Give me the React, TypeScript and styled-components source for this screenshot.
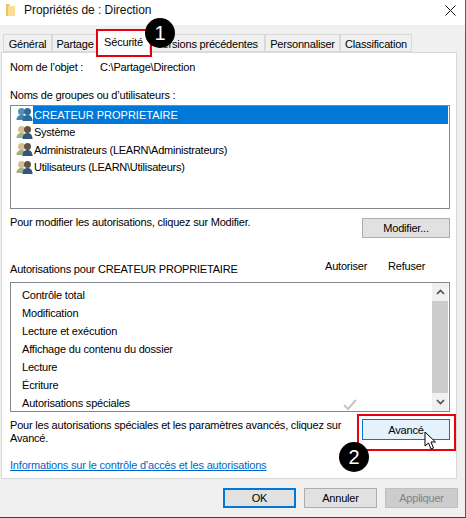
import React from "react";
import styled, { createGlobalStyle } from "styled-components";

const Global = createGlobalStyle`
  html, body { margin: 0; padding: 0; background: #f0f0f0; }
  #root { width: 466px; height: 518px; }
`;

const Win = styled.div`
  position: relative;
  width: 466px;
  height: 518px;
  box-sizing: border-box;
  overflow: hidden;
  background: #f0f0f0;
  border-right: 1px solid #5a5a5a;
  border-bottom: 1px solid #1d4f57;
  font-family: "Liberation Sans", Arial, sans-serif;
  font-size: 11px;
  letter-spacing: -0.2px;
  color: #000;
`;

const TitleBar = styled.div`
  height: 25px;
  box-sizing: border-box;
  background: #fff;
  display: flex;
  align-items: center;
  padding: 0 9px 5px 5px;
  gap: 8px;
  font-size: 12px;
  letter-spacing: -0.05px;
`;
const Title = styled.span`
  flex: 1;
  color: #111;
`;
const FolderSvg = styled.svg`
  flex-shrink: 0;
`;

const TabStrip = styled.div`
  height: 27px;
  display: flex;
  align-items: flex-end;
  padding-left: 3px;
`;
const Tab = styled.div<{ $w: number; $active?: boolean }>`
  width: ${(p) => p.$w}px;
  height: ${(p) => (p.$active ? 23 : 18)}px;
  box-sizing: border-box;
  display: flex;
  align-items: ${(p) => (p.$active ? "flex-start" : "center")};
  justify-content: center;
  padding-top: ${(p) => (p.$active ? "5px" : "1px")};
  white-space: nowrap;
  overflow: hidden;
  border: 1px solid #d9d9d9;
  border-bottom: ${(p) => (p.$active ? "none" : "1px solid #d9d9d9")};
  margin-left: ${(p) => (p.$active ? "-1px" : "0")};
  margin-right: ${(p) => (p.$active ? "-1px" : "0")};
  margin-bottom: ${(p) => (p.$active ? "-1px" : "0")};
  background: ${(p) => (p.$active ? "#fff" : "#f0f0f0")};
  position: relative;
  z-index: ${(p) => (p.$active ? 1 : 0)};
`;

const Panel = styled.div`
  margin-left: 1px;
  width: 456px;
  height: 427px;
  box-sizing: border-box;
  background: #fff;
  border: 1px solid #d9d9d9;
  padding: 0 6px 0 8px;
  display: flex;
  flex-direction: column;
`;

const Line = styled.div<{ $h: number; $pt?: number }>`
  height: ${(p) => p.$h}px;
  box-sizing: border-box;
  padding-top: ${(p) => p.$pt ?? 0}px;
  display: flex;
  align-items: center;
  flex-shrink: 0;
  white-space: nowrap;
`;
const ObjectLabel = styled.span`
  width: 90px;
`;

const ListBox = styled.div<{ $h: number }>`
  position: relative;
  height: ${(p) => p.$h}px;
  box-sizing: border-box;
  border: 1px solid #828790;
  background: #fff;
  flex-shrink: 0;
  display: flex;
`;
const UserList = styled.div`
  flex: 1;
  padding: 0 1px;
  display: flex;
  flex-direction: column;
`;
const UserRow = styled.div`
  height: 17.5px;
  display: flex;
  align-items: center;
  padding-left: 4px;
`;
const UserName = styled.div<{ $sel?: boolean }>`
  flex: ${(p) => (p.$sel ? 1 : "none")};
  height: 100%;
  display: flex;
  align-items: center;
  padding-left: 1px;
  background: ${(p) => (p.$sel ? "#0078d7" : "transparent")};
  color: ${(p) => (p.$sel ? "#fff" : "#000")};
  letter-spacing: ${(p) => (p.$sel ? "0" : "-0.25px")};
`;

const ModifyRow = styled.div`
  height: 29px;
  display: flex;
  justify-content: space-between;
  align-items: flex-start;
  flex-shrink: 0;
`;
const ModifyText = styled.span`
  margin-top: 7px;
`;
const ModifyBtn = styled.div`
  margin-top: 9px;
`;

const HeadRow = styled.div`
  height: 44px;
  display: flex;
  justify-content: space-between;
  align-items: flex-end;
  flex-shrink: 0;
  white-space: nowrap;
`;
const HeadLabel = styled.span`
  margin-bottom: 7px;
`;
const PermHead = styled.div`
  display: flex;
  margin-bottom: 10px;
`;
const PermHeadCol = styled.span<{ $w: number }>`
  width: ${(p) => p.$w}px;
`;

const PermList = styled.div`
  flex: 1;
  padding: 3px 0 0 11px;
`;
const PermRow = styled.div`
  height: 18px;
  display: flex;
  align-items: center;
`;
const Scrollbar = styled.div`
  width: 16px;
  margin: 0 1px 0 0;
  background: #f0f0f0;
  display: flex;
  flex-direction: column;
`;
const ScrollBtn = styled.div`
  height: 18px;
  display: flex;
  align-items: center;
  justify-content: center;
  flex-shrink: 0;
`;
const Thumb = styled.div`
  flex: 1;
  background: #cdcdcd;
`;
const Check = styled.svg`
  position: absolute;
  left: 331px;
  top: 115px;
`;

const Btn = styled.div<{ $kind?: "hover" | "default" | "disabled" }>`
  width: 88px;
  height: 20px;
  box-sizing: border-box;
  display: flex;
  align-items: center;
  justify-content: center;
  flex-shrink: 0;
  border: ${(p) =>
    p.$kind === "hover"
      ? "1px solid #0078d7"
      : p.$kind === "default"
      ? "2px solid #0078d7"
      : p.$kind === "disabled"
      ? "1px solid #bfbfbf"
      : "1px solid #adadad"};
  background: ${(p) =>
    p.$kind === "hover" ? "#e5f1fb" : p.$kind === "disabled" ? "#cccccc" : "#e1e1e1"};
  color: ${(p) => (p.$kind === "disabled" ? "#838383" : "#000")};
`;
const AdvancedBtn = styled(Btn)`
  height: 21px;
  margin-top: 3px;
`;
const AdvancedRow = styled.div`
  height: 28px;
  margin-top: 4px;
  display: flex;
  justify-content: space-between;
  align-items: flex-start;
  flex-shrink: 0;
`;
const Help = styled.div`
  width: 340px;
  line-height: 13px;
  padding-top: 3px;
`;
const HelpLink = styled.span`
  color: #0066cc;
  text-decoration: underline;
`;
const Footer = styled.div`
  display: flex;
  justify-content: flex-end;
  gap: 8px;
  padding: 9px 7px 0 0;
`;
const FootBtn = styled(Btn)`
  width: 73px;
`;

const RedBox = styled.div<{ $x: number; $y: number; $w: number; $h: number }>`
  position: absolute;
  left: ${(p) => p.$x}px;
  top: ${(p) => p.$y}px;
  width: ${(p) => p.$w}px;
  height: ${(p) => p.$h}px;
  box-sizing: border-box;
  border: 2px solid #e8000b;
  z-index: 2;
`;
const Badge = styled.div<{ $x: number; $y: number }>`
  position: absolute;
  left: ${(p) => p.$x}px;
  top: ${(p) => p.$y}px;
  width: 30px;
  height: 30px;
  border-radius: 50%;
  background: #000;
  color: #fff;
  font-family: "Liberation Sans", sans-serif;
  font-size: 20px;
  letter-spacing: 0;
  display: flex;
  align-items: center;
  justify-content: center;
  z-index: 3;
`;
const Cursor = styled.svg`
  position: absolute;
  left: 424px;
  top: 431px;
  z-index: 4;
`;

const FolderIcon = () => (
  <FolderSvg width="11" height="13" viewBox="0 0 11 13">
    <path d="M1 0h3l1 2h5v10H1z" fill="#e9c566" />
    <path d="M3 2h7v10H3z" fill="#f8de96" />
  </FolderSvg>
);

const UsersIcon = ({ selected }: { selected?: boolean }) => {
  const a = selected ? "#3d87b8" : "#a3b07e";
  const b = selected ? "#2d6a9a" : "#34557f";
  const skinA = selected ? "#4f8fbc" : "#d9bd8f";
  const skinB = selected ? "#2f6b96" : "#5f5348";
  return (
    <svg width="17" height="15" viewBox="0 0 17 15" style={{ flexShrink: 0 }}>
      <circle cx="5.5" cy="4.5" r="3.5" fill={skinA} />
      <path d="M0.5 13c0-3.5 2-5 5-5s5 1.500 5 5z" fill={a} />
      <circle cx="11.500" cy="4.500" r="3.500" fill={skinB} />
      <path d="M6.500 14c0-4 2-6 5-6s5 2 5 6z" fill={b} />
    </svg>
  );
};

const users = [
  "CREATEUR PROPRIETAIRE",
  "Système",
  "Administrateurs (LEARN\\Administrateurs)",
  "Utilisateurs (LEARN\\Utilisateurs)",
];
const perms = [
  "Contrôle total",
  "Modification",
  "Lecture et exécution",
  "Affichage du contenu du dossier",
  "Lecture",
  "Écriture",
  "Autorisations spéciales",
];
const tabs: [string, number, boolean?][] = [
  ["Général", 49],
  ["Partage", 46],
  ["Sécurité", 53, true],
  ["Versions précédentes", 116],
  ["Personnaliser", 75],
  ["Classification", 72],
];

export default function App() {
  return (
    <Win>
      <Global />
      <TitleBar>
        <FolderIcon />
        <Title>Propriétés de : Direction</Title>
        <svg width="11" height="11" viewBox="0 0 11 11">
          <path d="M.5.5l10 10M10.500.5l-10 10" stroke="#111" strokeWidth="1" />
        </svg>
      </TitleBar>
      <TabStrip>
        {tabs.map(([t, w, a]) => (
          <Tab key={t} $w={w} $active={a}>
            {t}
          </Tab>
        ))}
      </TabStrip>
      <Panel>
        <Line $h={27}>
          <ObjectLabel>Nom de l’objet :</ObjectLabel>
          <span>C:\Partage\Direction</span>
        </Line>
        <Line $h={25} $pt={5}>Noms de groupes ou d’utilisateurs :</Line>
        <ListBox $h={104}>
          <UserList>
            {users.map((u, i) => (
              <UserRow key={u}>
                <UsersIcon selected={i === 0} />
                <UserName $sel={i === 0}>{u}</UserName>
              </UserRow>
            ))}
          </UserList>
        </ListBox>
        <ModifyRow>
          <ModifyText>Pour modifier les autorisations, cliquez sur Modifier.</ModifyText>
          <ModifyBtn>
            <Btn>Modifier...</Btn>
          </ModifyBtn>
        </ModifyRow>
        <HeadRow>
          <HeadLabel>Autorisations pour CREATEUR PROPRIETAIRE</HeadLabel>
          <PermHead>
            <PermHeadCol $w={63}>Autoriser</PermHeadCol>
            <PermHeadCol $w={62}>Refuser</PermHeadCol>
          </PermHead>
        </HeadRow>
        <ListBox $h={130}>
          <PermList>
            {perms.map((p) => (
              <PermRow key={p}>{p}</PermRow>
            ))}
          </PermList>
          <Scrollbar>
            <ScrollBtn>
              <svg width="9" height="6" viewBox="0 0 9 6">
                <path d="M1 5l3.500-3.500L8 5" fill="none" stroke="#505050" strokeWidth="1.600" />
              </svg>
            </ScrollBtn>
            <Thumb />
            <ScrollBtn>
              <svg width="9" height="6" viewBox="0 0 9 6">
                <path d="M1 1l3.500 3.500L8 1" fill="none" stroke="#505050" strokeWidth="1.600" />
              </svg>
            </ScrollBtn>
          </Scrollbar>
          <Check width="16" height="13" viewBox="0 0 16 13">
            <path d="M2 7l4 4 8-9" fill="none" stroke="#c4c4c4" strokeWidth="2" />
          </Check>
        </ListBox>
        <AdvancedRow>
          <Help>Pour les autorisations spéciales et les paramètres avancés, cliquez sur Avancé.</Help>
          <AdvancedBtn $kind="hover">Avancé</AdvancedBtn>
        </AdvancedRow>
        <Line $h={33} $pt={9}>
          <HelpLink>Informations sur le contrôle d’accès et les autorisations</HelpLink>
        </Line>
      </Panel>
      <Footer>
        <FootBtn $kind="default">OK</FootBtn>
        <FootBtn>Annuler</FootBtn>
        <FootBtn $kind="disabled">Appliquer</FootBtn>
      </Footer>
      <RedBox $x={96} $y={29} $w={56} $h={28} />
      <RedBox $x={357} $y={414} $w={99} $h={37} />
      <Badge $x={145} $y={18}>1</Badge>
      <Badge $x={339} $y={442}>2</Badge>
      <Cursor width="13" height="19" viewBox="0 0 13 19">
        <path d="M1 1v14l3.500-3 2.500 6 2.500-1-2.500-6h4.500z" fill="#fff" stroke="#000" strokeWidth="1" />
      </Cursor>
    </Win>
  );
}
